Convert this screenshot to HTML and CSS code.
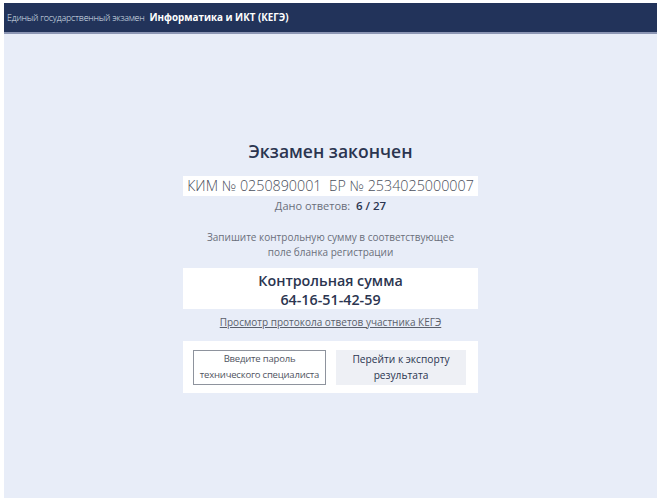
FILE: index.html
```html
<!DOCTYPE html>
<html lang="ru">
<head>
<meta charset="utf-8">
<link rel="stylesheet" href="styles.css">
</head>
<body>
<div class="frame">
  <header class="topbar">
    <span class="exam">Единый государственный экзамен</span>
    <span class="subject">Информатика и ИКТ (КЕГЭ)</span>
  </header>
  <main class="main">
    <div class="content">
      <h1 class="title">Экзамен закончен</h1>
      <div class="kim">КИМ № 0250890001&nbsp; БР № 2534025000007</div>
      <div class="answers">Дано ответов:&nbsp; <b>6 / 27</b></div>
      <p class="note">Запишите контрольную сумму в соответствующее<br>поле бланка регистрации</p>
      <div class="checksum">
        <div>Контрольная сумма</div>
        <div>64-16-51-42-59</div>
      </div>
      <a class="protocol" href="#">Просмотр протокола ответов участника КЕГЭ</a>
      <div class="actions">
        <div class="pass">Введите пароль<br>технического специалиста</div>
        <div class="export">Перейти к экспорту<br>результата</div>
      </div>
    </div>
  </main>
</div>
</body>
</html>
```

FILE: styles.css
```css
html, body {
  margin: 0;
  padding: 0;
  background: #ffffff;
}
body {
  width: 662px;
  height: 502px;
  font-family: "Open Sans", "Noto Sans", sans-serif;
}
.frame {
  box-sizing: border-box;
  height: 502px;
  padding: 3px 5px 4px 4px;
  display: flex;
  flex-direction: column;
}
.topbar {
  height: 29px;
  background: #22335a;
  border-bottom: 2px solid #8c96b4;
  display: flex;
  align-items: center;
  gap: 5px;
  padding-left: 3px;
  font-size: 9px;
  color: #ffffff;
}
.exam {
  font-weight: 300;
  color: #dfe4ef;
  letter-spacing: -0.25px;
}
.subject {
  font-weight: 700;
  font-size: 9.8px;
}
.main {
  flex: 1;
  background: #e8edf8;
  display: flex;
  align-items: center;
  justify-content: center;
}
.content {
  width: 295px;
  display: flex;
  flex-direction: column;
  align-items: center;
  color: #2b3550;
}
.title {
  margin: 0 0 14px;
  font-size: 17.5px;
  font-weight: 600;
  color: #2b3550;
  line-height: 22px;
}
.kim {
  align-self: stretch;
  background: #ffffff;
  text-align: center;
  font-size: 14.3px;
  font-weight: 300;
  color: #4a4f5c;
  line-height: 20px;
}
.answers {
  margin-top: 2px;
  font-size: 11px;
  color: #6a6f7b;
  line-height: 16px;
}
.answers b {
  font-weight: 600;
  color: #2b3550;
  font-size: 11.5px;
}
.note {
  margin: 16px 0 0;
  text-align: center;
  font-size: 10px;
  font-weight: 400;
  color: #6a6f7b;
  line-height: 15px;
}
.checksum {
  margin-top: 8px;
  align-self: stretch;
  background: #ffffff;
  text-align: center;
  font-size: 14.3px;
  font-weight: 600;
  line-height: 19px;
  padding: 3px 0 0;
  color: #2b3550;
}
.protocol {
  margin-top: 6px;
  font-size: 10px;
  color: #5a5f6b;
  line-height: 15px;
  text-decoration: underline;
}
.actions {
  margin-top: 11px;
  align-self: stretch;
  box-sizing: border-box;
  background: #ffffff;
  padding: 9px 12px 8px 10px;
  display: flex;
  gap: 10px;
}
.pass, .export {
  box-sizing: border-box;
  height: 35px;
  display: flex;
  align-items: center;
  justify-content: center;
  text-align: center;
  line-height: 16px;
}
.pass {
  width: 133px;
  border: 1px solid #8e939d;
  color: #4f5461;
  font-size: 9.5px;
  font-weight: 400;
  letter-spacing: -0.2px;
}
.export {
  flex: 1;
  background: #eef0f5;
  color: #2b3550;
  font-size: 10.2px;
}
```
